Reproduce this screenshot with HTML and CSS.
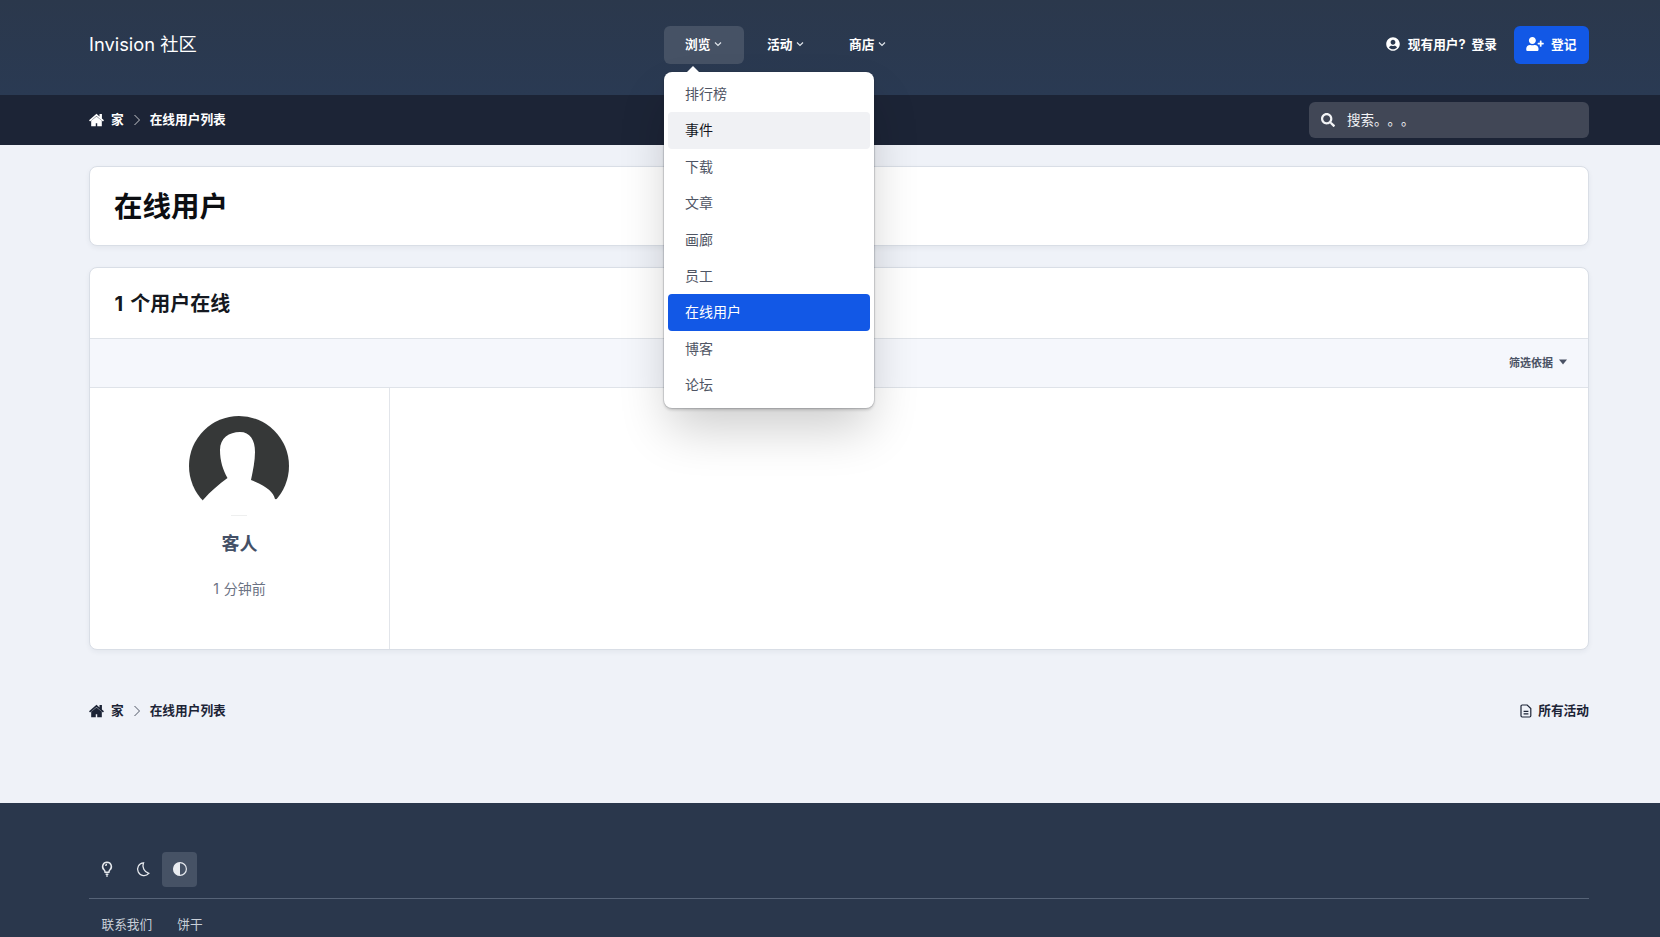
FILE: index.html
```html
<!DOCTYPE html>
<html lang="zh-CN">
<head>
<meta charset="utf-8">
<title>在线用户 - Invision 社区</title>
<link rel="stylesheet" href="styles.css">
</head>
<body>
<header class="site-header">
  <a class="logo">Invision 社区</a>
  <nav class="main-nav">
    <div class="nav-entry">
      <a class="nav-link is-open">浏览<svg class="chev" viewBox="0 0 10 10"><path d="M2 3.5 5 6.5 8 3.5"/></svg></a>
      <div class="menu">
        <span class="menu-arrow"></span>
        <a class="menu-item">排行榜</a>
        <a class="menu-item is-hover">事件</a>
        <a class="menu-item">下载</a>
        <a class="menu-item">文章</a>
        <a class="menu-item">画廊</a>
        <a class="menu-item">员工</a>
        <a class="menu-item is-active">在线用户</a>
        <a class="menu-item">博客</a>
        <a class="menu-item">论坛</a>
      </div>
    </div>
    <a class="nav-link">活动<svg class="chev" viewBox="0 0 10 10"><path d="M2 3.5 5 6.5 8 3.5"/></svg></a>
    <a class="nav-link">商店<svg class="chev" viewBox="0 0 10 10"><path d="M2 3.5 5 6.5 8 3.5"/></svg></a>
  </nav>
  <div class="user-bar">
    <a class="login"><svg class="icon-14" viewBox="0 0 496 512"><path d="M248 8C111 8 0 119 0 256s111 248 248 248 248-111 248-248S385 8 248 8zm0 96c48.6 0 88 39.4 88 88s-39.4 88-88 88-88-39.4-88-88 39.4-88 88-88zm0 344c-58.7 0-111.3-26.6-146.5-68.2 18.8-35.4 55.6-59.8 98.5-59.8 2.4 0 4.8.4 7.1 1.1 13 4.2 26.6 6.9 40.9 6.9 14.3 0 28-2.7 40.9-6.9 2.3-.7 4.7-1.1 7.1-1.1 42.9 0 79.7 24.4 98.5 59.8C359.3 421.4 306.7 448 248 448z"/></svg>现有用户? 登录</a>
    <a class="register"><svg class="icon-reg" viewBox="0 0 640 512"><path d="M624 208h-64v-64c0-8.8-7.2-16-16-16h-32c-8.8 0-16 7.2-16 16v64h-64c-8.8 0-16 7.2-16 16v32c0 8.8 7.2 16 16 16h64v64c0 8.8 7.2 16 16 16h32c8.8 0 16-7.2 16-16v-64h64c8.8 0 16-7.2 16-16v-32c0-8.8-7.2-16-16-16zm-400 48c70.7 0 128-57.3 128-128S294.7 0 224 0 96 57.3 96 128s57.3 128 128 128zm89.6 32h-16.7c-22.2 10.2-46.9 16-72.9 16s-50.6-5.8-72.9-16h-16.7C60.2 288 0 348.2 0 422.4V464c0 26.5 21.5 48 48 48h352c26.5 0 48-21.5 48-48v-41.6c0-74.2-60.2-134.4-134.4-134.4z"/></svg>登记</a>
  </div>
</header>

<div class="crumb-bar">
  <ol class="crumbs crumbs-light">
    <li class="crumb"><svg class="icon-home" viewBox="0 0 576 512"><path d="M288 20 0 262l40 50L288 100l248 212 40-50-80-68V30h-92v90zM288 118 84 284v212h176V384h56v112h176V284z"/></svg>家</li>
    <li class="sep"><svg viewBox="0 0 8 12"><path d="M1.5 1 6.5 6 1.5 11"/></svg></li>
    <li class="crumb">在线用户列表</li>
  </ol>
  <div class="search">
    <svg class="icon-14" viewBox="0 0 512 512"><path d="M505 442.7L405.3 343c-4.5-4.5-10.6-7-17-7H372c27.6-35.3 44-79.7 44-128C416 93.1 322.9 0 208 0S0 93.1 0 208s93.1 208 208 208c48.3 0 92.7-16.4 128-44v16.3c0 6.4 2.5 12.5 7 17l99.7 99.7c9.4 9.4 24.6 9.4 33.9 0l28.3-28.3c9.4-9.4 9.4-24.6.1-34zM208 336c-70.7 0-128-57.2-128-128 0-70.7 57.2-128 128-128 70.7 0 128 57.2 128 128 0 70.7-57.2 128-128 128z"/></svg>
    <span class="search-text">搜索。。。</span>
  </div>
</div>

<main class="content">
  <section class="card title-card"><h1>在线用户</h1></section>
  <section class="card list-card">
    <h2 class="list-title">1 个用户在线</h2>
    <div class="filter-bar"><a class="filter">筛选依据<svg class="caret" viewBox="0 0 10 6"><path d="M1 .5h8L5 5.500z"/></svg></a></div>
    <div class="user-grid">
      <article class="user-cell">
        <svg class="avatar" viewBox="0 0 100 100">
          <circle cx="50" cy="50" r="50" fill="#363838"/>
          <path fill="#fff" d="M51 16C40 16 31 22 31 34C31 45 34 54 38.500 62C30 68 22 75 14 84V102H90V84L86 83C84 76 79 71 62 64C64 54 66 45 66 36C66 24 61 16 51 16Z"/>
          <path d="M42 99.600H58" stroke="#e4e5e6" stroke-width=".7" fill="none"/>
        </svg>
        <h3 class="user-name">客人</h3>
        <p class="user-time">1 分钟前</p>
      </article>
    </div>
  </section>
  <div class="bottom-row">
    <ol class="crumbs crumbs-dark">
      <li class="crumb"><svg class="icon-home" viewBox="0 0 576 512"><path d="M288 20 0 262l40 50L288 100l248 212 40-50-80-68V30h-92v90zM288 118 84 284v212h176V384h56v112h176V284z"/></svg>家</li>
      <li class="sep"><svg viewBox="0 0 8 12"><path d="M1.5 1 6.5 6 1.5 11"/></svg></li>
      <li class="crumb">在线用户列表</li>
    </ol>
    <a class="all-activity"><svg class="icon-doc" viewBox="0 0 12 14"><path class="doc-line" d="M2.200 1h5l3.600 3.600v7.200a1.200 1.200 0 0 1-1.200 1.200H2.200A1.200 1.200 0 0 1 1 11.800V2.200A1.200 1.200 0 0 1 2.200 1zM3.600 7.400h4.800M3.600 9.800h4.800"/></svg>所有活动</a>
  </div>
</main>

<footer class="site-footer">
  <div class="theme-row">
    <a class="theme-btn"><svg viewBox="0 0 14 16"><path d="M7 1.200a4.400 4.400 0 0 0-3 7.600c.7.700 1 1.400 1.100 2.400h3.800c.1-1 .4-1.700 1.100-2.400A4.400 4.400 0 0 0 7 1.200zM5.600 13.200h2.800M6.200 14.900h1.600M5.600 4.800A1.500 1.500 0 0 1 7 3.600"/></svg></a>
    <a class="theme-btn"><svg class="moon" viewBox="0 0 14 16"><path d="M7.500 1.800A6.400 6.400 0 1 0 12.800 12.400 8 8 0 0 1 7.500 1.800z"/></svg></a>
    <a class="theme-btn is-current"><svg class="half" viewBox="0 0 16 16"><circle cx="8" cy="8" r="6.400"/><path class="half-fill" d="M8 1.400a6.600 6.600 0 0 0 0 13.200z"/></svg></a>
  </div>
  <div class="footer-links"><a class="footer-link">联系我们</a><a class="footer-link">饼干</a></div>
</footer>
</body>
</html>
```

FILE: styles.css
```css
* { box-sizing: border-box; }
html, body { margin: 0; height: 937px; overflow: hidden; }
body {
  background: linear-gradient(180deg, #ebf1f7 0, #eff2f8 140px);
  font-family: Inter, "Noto Sans CJK SC", sans-serif;
  font-size: 14px;
  color: #1c2436;
}
a { color: inherit; text-decoration: none; }
ol { list-style: none; margin: 0; padding: 0; }
svg { display: block; flex: none; fill: currentColor; }

/* header */
.site-header {
  height: 95px;
  padding: 0 71px 6px 89px;
  display: grid;
  grid-template-columns: 575px auto 1fr;
  align-items: center;
  background: linear-gradient(180deg, #2b384c 0, #2a3a53 100%);
  color: #fff;
}
.logo { font-size: 18.3px; font-weight: 400; color: #fff; padding-bottom: 3px; }
.main-nav { display: flex; gap: 2px; }
.nav-entry { position: relative; }
.nav-link {
  height: 38px;
  width: 80px;
  padding: 0 0 2px 21px;
  border-radius: 6px;
  display: flex;
  align-items: center;
  gap: 3px;
  font-size: 12.7px;
  font-weight: 700;
}
.nav-link.is-open { background: #465265; }
.chev { width: 10px; height: 10px; fill: none; stroke: #dfe4ea; stroke-width: 1.2; }

.menu {
  position: absolute;
  left: 0;
  top: 46px;
  z-index: 5;
  width: 210px;
  height: 336px;
  padding: 4px;
  background: #fff;
  border-radius: 8px;
  box-shadow: 0 0 0 1px rgba(30, 40, 60, .12), 0 2px 3px rgba(0, 0, 0, .18), 0 25px 50px -5px rgba(0, 0, 0, .2);
  display: flex;
  flex-direction: column;
}
.menu-arrow {
  position: absolute;
  left: 23px;
  top: -6px;
  width: 0;
  height: 0;
  border-left: 6px solid transparent;
  border-right: 6px solid transparent;
  border-bottom: 6px solid #fff;
}
.menu-item {
  height: 37px;
  margin-bottom: -.6px;
  flex: none;
  padding: 0 0 2px 17px;
  display: flex;
  align-items: center;
  border-radius: 4px;
  font-size: 14px;
  color: #4f5564;
}
.menu-item.is-hover { background: #f0f1f4; color: #16181f; }
.menu-item.is-active { background: #1258e6; color: #fff; }

.user-bar { display: flex; justify-content: flex-end; align-items: center; gap: 17px; }
.login { display: flex; align-items: center; gap: 8px; font-size: 12.7px; font-weight: 700; word-spacing: 3px; padding-bottom: 2px; }
.icon-14 { width: 14px; height: 14px; }
.register {
  width: 75px;
  height: 38px;
  padding: 0 0 2px 12px;
  display: flex;
  align-items: center;
  gap: 7px;
  background: #1258e6;
  border-radius: 6px;
  font-size: 12.7px;
  font-weight: 700;
}
.icon-reg { width: 18px; height: 14px; }

/* breadcrumb */
.crumb-bar {
  height: 50px;
  padding: 0 71px 0 89px;
  display: flex;
  align-items: center;
  justify-content: space-between;
  background: #1c2436;
}
.crumbs { display: flex; align-items: center; font-size: 12.7px; font-weight: 700; }
.crumbs-light { color: #fff; }
.crumbs-dark { color: #1c2436; }
.crumb { display: flex; align-items: center; gap: 7px; padding-bottom: 3px; }
.icon-home { width: 15px; height: 14px; margin-top: 3px; }
.sep { width: 26px; display: flex; justify-content: center; }
.sep svg { width: 8px; height: 12px; fill: none; stroke: currentColor; stroke-width: 1; opacity: .75; }
.search {
  width: 280px;
  height: 36px;
  padding-left: 12px;
  display: flex;
  align-items: center;
  gap: 12px;
  background: #414756;
  border-radius: 6px;
  color: #f3f4f6;
  font-size: 13.5px;
}
.search-text { text-spacing-trim: space-all; padding-bottom: 3px; }

/* content */
.content { height: 658px; padding: 21px 71px 0 89px; }
.card {
  background: #fff;
  border: 1px solid #d9dee6;
  border-radius: 8px;
  box-shadow: 0 2px 5px rgba(40, 50, 70, .06);
}
.title-card { height: 80px; padding: 0 24px 4px; display: flex; align-items: center; }
h1 { margin: 0; font-size: 28.5px; font-weight: 700; color: #0c0e12; }
.list-card { margin-top: 21px; height: 383px; overflow: hidden; }
.list-title {
  margin: 0;
  height: 70px;
  padding: 0 24.5px 2px;
  display: flex;
  align-items: center;
  font-size: 20px;
  font-weight: 700;
  color: #141820;
  word-spacing: 2.5px;
}
.filter-bar {
  height: 50px;
  padding: 0 20px 2px;
  display: flex;
  align-items: center;
  justify-content: flex-end;
  background: #f5f7fc;
  border-top: 1px solid #dfe3e9;
  border-bottom: 1px solid #dfe3e9;
}
.filter { display: flex; align-items: center; gap: 5px; font-size: 11px; font-weight: 700; color: #4a5264; }
.caret { width: 10px; height: 6px; }
.user-grid { display: grid; grid-template-columns: 300px 1fr; height: 262px; }
.user-cell {
  border-right: 1px solid #e2e5ea;
  padding-top: 28px;
  display: flex;
  flex-direction: column;
  align-items: center;
}
.avatar { width: 100px; height: 100px; margin-right: 1px; }
.user-name { margin: 15px 0 0; font-size: 18px; line-height: 26px; font-weight: 700; color: #445066; }
.user-time { margin: 22px 0 0; font-size: 14px; line-height: 20px; color: #6b7283; word-spacing: 1px; }
.bottom-row {
  margin-top: 49px;
  display: flex;
  justify-content: space-between;
  align-items: center;
  height: 24px;
}
.all-activity { display: flex; align-items: center; gap: 6px; font-size: 12.7px; font-weight: 700; color: #1c2436; padding-bottom: 3px; }
.icon-doc { width: 12px; height: 14px; margin-top: 3px; }
.doc-line { fill: none; stroke: currentColor; stroke-width: 1.2; }

/* footer */
.site-footer {
  height: 134px;
  padding: 49px 71px 0 89px;
  background: #2a374c;
  color: #dfe4ea;
}
.theme-row { display: flex; gap: 1.5px; padding-bottom: 11px; border-bottom: 1px solid #566377; }
.theme-btn { width: 35px; height: 35px; padding-bottom: 2px; border-radius: 4px; display: flex; align-items: center; justify-content: center; }
.theme-btn svg { width: 14px; height: 16px; fill: none; stroke: #e6e9ee; stroke-width: 1.5; }
.theme-btn .moon { stroke-width: 1.3; }
.theme-btn.is-current { background: #465265; }
.theme-btn .half { width: 16px; height: 16px; stroke-width: 1.2; }
.half-fill { fill: #e9ecf0; stroke: none; }
.footer-links { display: flex; gap: 25px; padding: 16px 0 0 12.5px; }
.footer-link { font-size: 12.7px; color: #c9cfd8; line-height: 20px; }
```
